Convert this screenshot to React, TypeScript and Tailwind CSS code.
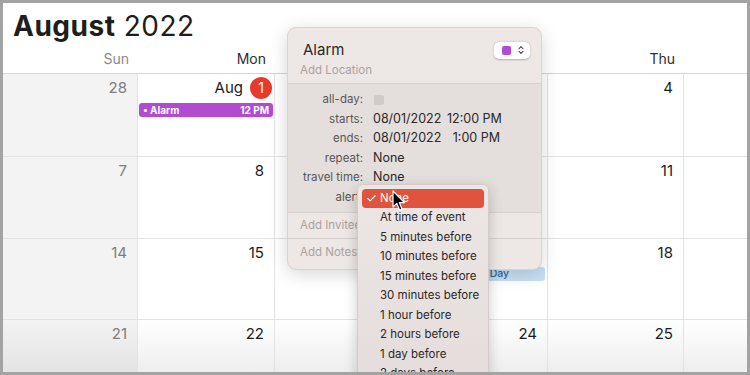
import React from 'react';
import { ChevronsUpDown, Check } from 'lucide-react';

const days = [
  ['28', '1', '2', '3', '4', ''],
  ['7', '8', '9', '10', '11', ''],
  ['14', '15', '16', '17', '18', ''],
  ['21', '22', '23', '24', '25', ''],
];

const weekdays = ['Sun', 'Mon', 'Tue', 'Wed', 'Thu', ''];

const alertOptions = [
  'At time of event',
  '5 minutes before',
  '10 minutes before',
  '15 minutes before',
  '30 minutes before',
  '1 hour before',
  '2 hours before',
  '1 day before',
  '2 days before',
];

const rowHeights = ['h-[83px]', 'h-[82px]', 'h-[81px]', 'flex-1'];

const Cell: React.FC<{ day: string; col: number; row: number }> = ({ day, col, row }) => {
  const isSun = col === 0;
  const last = row === 3;
  const bg = last
    ? isSun
      ? 'bg-linear-to-b from-[#f3f3f3] to-[#e4e4e4]'
      : 'bg-linear-to-b from-white to-[#eeeeee]'
    : isSun
      ? 'bg-[#f3f3f3]'
      : 'bg-white';

  return (
    <div className={`${bg} ${col > 0 ? 'border-l border-[#e3e3e3]' : ''} flex flex-col`}>
      {row === 0 && col === 1 ? (
        <div className="flex items-center justify-end pt-[3px] pr-[2px] h-[24px]">
          <span className="text-[15px] leading-[20px] text-[#1c1c1c] mr-[7px]">Aug</span>
          <span className="w-[22px] h-[22px] rounded-full bg-[#e8392d] text-white text-[14px] flex items-center justify-center">
            1
          </span>
        </div>
      ) : (
        <div
          className={`h-[24px] text-right pr-[10px] pt-[4px] text-[15px] leading-[20px] ${
            isSun ? 'text-[#7d7d7d]' : 'text-[#1c1c1c]'
          }`}
        >
          {day}
        </div>
      )}
      {row === 0 && col === 1 && (
        <div className="mt-[5px] mx-[1px] h-[14px] rounded-[3px] bg-[#b14cd2] text-white text-[10px] font-bold flex items-center justify-between px-[4px]">
          <span>• Alarm</span>
          <span>12 PM</span>
        </div>
      )}
      {row === 2 && col === 3 && (
        <div className="mt-[4px] ml-[1px] mr-[2px] h-[14px] rounded-[3px] bg-[#c7e0f4] text-[#34658f] text-[10.5px] font-medium flex items-center pl-[18px] whitespace-nowrap overflow-hidden">
          Thrift Shop Day
        </div>
      )}
    </div>
  );
};

const Cursor: React.FC = () => (
  <svg width="14" height="22" viewBox="0 0 14 22" className="absolute left-[389px] top-[187px] z-30">
    <path
      d="M1 1 L1 17 L4.8 13.4 L7.6 20 L10 19 L7.3 12.6 L12.4 12.6 Z"
      fill="#000"
      stroke="#fff"
      strokeWidth="1.2"
      strokeLinejoin="round"
    />
  </svg>
);

const Label: React.FC<{ children: React.ReactNode }> = ({ children }) => (
  <span className="w-[75px] text-right text-[#5b5656] text-[11.5px] whitespace-nowrap">{children}</span>
);

const Popover: React.FC = () => (
  <div className="absolute left-[284px] top-[24px] w-[255px] h-[243px] rounded-[9px] bg-[#ede7e6] border border-[#d9d3d2] shadow-[0_4px_18px_rgba(0,0,0,0.16)] z-10 overflow-hidden flex flex-col">
    <div className="h-[55px] flex flex-col">
      <div className="flex items-center justify-between pt-[13px] pr-[11px]">
        <span className="pl-[15px] text-[15px] leading-[18px] text-[#2b2828]">Alarm</span>
        <div className="w-[36px] h-[17px] rounded-[5px] bg-white shadow-[0_0.5px_2px_rgba(0,0,0,0.25)] flex items-center pl-[8px] gap-[5px]">
          <span className="w-[9px] h-[9px] rounded-[2px] bg-[#b14cd2]" />
          <ChevronsUpDown size={10} strokeWidth={2.5} className="text-[#333]" />
        </div>
      </div>
      <span className="pl-[12px] mt-[3px] text-[11.5px] leading-[16px] text-[#aaa2a1]">Add Location</span>
    </div>
    <div className="border-t border-[#d6d0cf] bg-[#e4dfdd] h-[129px] pt-[6px] flex flex-col text-[12.5px] text-[#2b2828] whitespace-nowrap">
      <div className="flex items-center h-[19.5px]">
        <Label>all-day:</Label>
        <span className="ml-[11px] w-[10px] h-[10px] rounded-[2px] bg-[#d0cbca]" />
      </div>
      <div className="flex items-center h-[19.5px]">
        <Label>starts:</Label>
        <span className="ml-[10px] w-[74px]">08/01/2022</span>
        <span className="w-[53px] text-right">12:00 PM</span>
      </div>
      <div className="flex items-center h-[19.5px]">
        <Label>ends:</Label>
        <span className="ml-[10px] w-[74px]">08/01/2022</span>
        <span className="w-[53px] text-right">1:00 PM</span>
      </div>
      <div className="flex items-center h-[19.5px]">
        <Label>repeat:</Label>
        <span className="ml-[10px]">None</span>
      </div>
      <div className="flex items-center h-[19.5px]">
        <Label>travel time:</Label>
        <span className="ml-[10px]">None</span>
      </div>
      <div className="flex items-center h-[19.5px]">
        <Label>alert:</Label>
        <span className="ml-[10px]">None</span>
      </div>
    </div>
    <div className="border-t border-[#d6d0cf] h-[26px] flex items-center pl-[12px] text-[11.5px] text-[#aaa2a1]">
      Add Invitees
    </div>
    <div className="border-t border-[#d6d0cf] flex-1 flex items-center pl-[12px] pb-[2px] text-[11.5px] text-[#aaa2a1] whitespace-nowrap">
      Add Notes, URL, or Attachments
    </div>
  </div>
);

const AlertMenu: React.FC = () => (
  <div className="absolute left-[354px] top-[181px] w-[132px] h-[220px] rounded-[6px] bg-linear-to-b from-[#ece6e5] to-[#e3dcdb] border border-[#d3cccb] shadow-[0_4px_14px_rgba(0,0,0,0.2)] z-20 pt-[4px] px-[4px] text-[11.5px] whitespace-nowrap">
    <div className="h-[19px] rounded-[4px] bg-[#e0533e] text-white flex items-center pl-[4px]">
      <Check size={11} strokeWidth={2.5} className="mr-[3px]" />
      <span>None</span>
    </div>
    {alertOptions.map((opt) => (
      <div key={opt} className="h-[19.5px] flex items-center pl-[18px] text-[#2b2828]">
        {opt}
      </div>
    ))}
  </div>
);

export default function App() {
  return (
    <div
      className="w-[750px] h-[375px] bg-[#a3a3a3] p-[3px] overflow-hidden"
      style={{ fontFamily: 'Inter, "Noto Sans", sans-serif' }}
    >
      <div className="relative w-full h-full bg-white flex flex-col overflow-hidden">
        <div className="h-[40px] pl-[10px] pt-[6px]">
          <h1 className="text-[28px] leading-[34px] text-[#1e1e1e] tracking-[0.5px]">
            <span className="font-bold">August</span> <span className="font-normal">2022</span>
          </h1>
        </div>

        <div className="h-[31px] border-b border-[#d6d6d6] grid grid-cols-[134px_137px_137px_136px_136px_64px] items-end pb-[6px]">
          {weekdays.map((w, i) => (
            <div
              key={i}
              className={`h-[16px] text-right pr-[8px] text-[14px] leading-[16px] ${i === 0 ? 'text-[#8a8a8a]' : 'text-[#2e2e2e]'}`}
            >
              {w}
            </div>
          ))}
        </div>

        <div className="flex-1 flex flex-col">
          {days.map((week, r) => (
            <div
              key={r}
              className={`${rowHeights[r]} grid grid-cols-[134px_137px_137px_136px_136px_64px] ${
                r < 3 ? 'border-b border-[#e3e3e3]' : ''
              }`}
            >
              {week.map((d, c) => (
                <Cell key={c} day={d} col={c} row={r} />
              ))}
            </div>
          ))}
        </div>

        <Popover />
        <AlertMenu />
        <Cursor />
      </div>
    </div>
  );
}
